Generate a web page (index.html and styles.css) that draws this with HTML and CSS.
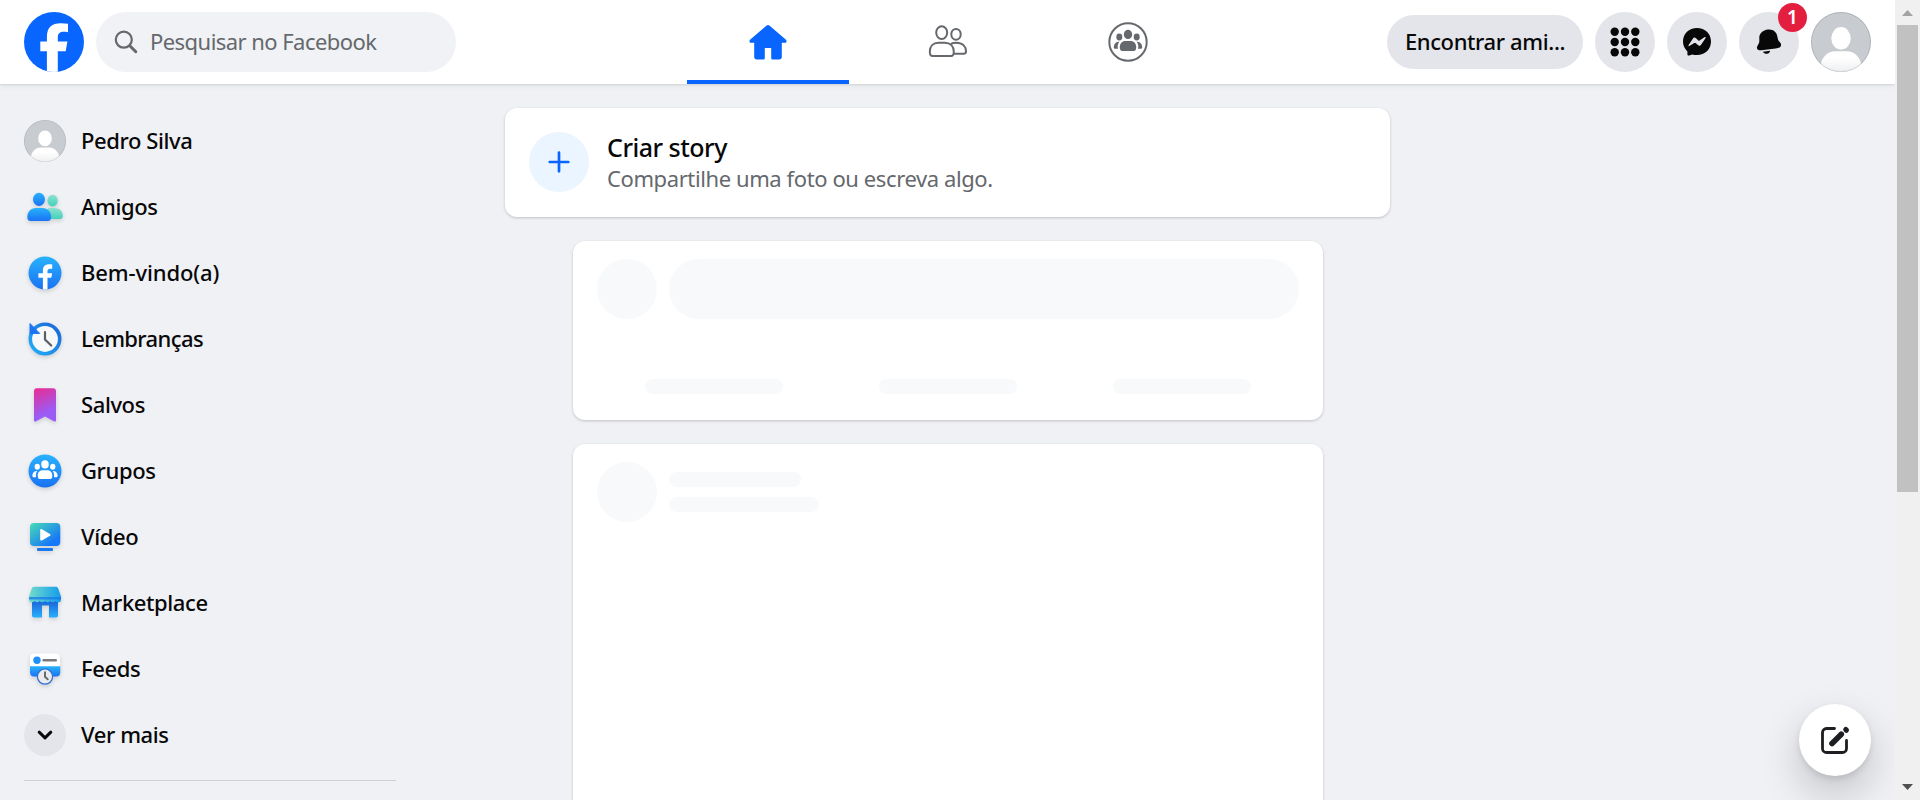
FILE: index.html
```html
<!DOCTYPE html>
<html lang="pt-BR">
<head>
<meta charset="utf-8">
<title>Facebook</title>
<link rel="stylesheet" href="styles.css">
</head>
<body>
<svg class="defs" width="0" height="0" aria-hidden="true">
  <defs>
    <linearGradient id="blue" x1="0" y1="0" x2="0" y2="1"><stop offset="0" stop-color="#28b2fc"/><stop offset="1" stop-color="#1a72f4"/></linearGradient>
    <linearGradient id="teal" x1="0" y1="0" x2="0" y2="1"><stop offset="0" stop-color="#8fe0d2"/><stop offset="1" stop-color="#43d2ba"/></linearGradient>
    <linearGradient id="ring" x1="1" y1="0" x2="0" y2="1"><stop offset="0" stop-color="#1c66d8"/><stop offset="1" stop-color="#22aef8"/></linearGradient>
    <linearGradient id="pink" x1="0.3" y1="0" x2="0.6" y2="1"><stop offset="0" stop-color="#e3309b"/><stop offset="0.75" stop-color="#9a5cf5"/></linearGradient>
    <linearGradient id="screen" x1="0" y1="0" x2="1" y2="1"><stop offset="0" stop-color="#48dcb4"/><stop offset="0.8" stop-color="#1677f8"/></linearGradient>
    <linearGradient id="roof" x1="0" y1="0" x2="1" y2="0"><stop offset="0" stop-color="#6fdccb"/><stop offset="1" stop-color="#149cec"/></linearGradient>
    <linearGradient id="shop" x1="0" y1="0" x2="0" y2="1"><stop offset="0.2" stop-color="#1c6bdc"/><stop offset="1" stop-color="#28b0fc"/></linearGradient>
    <linearGradient id="body" x1="0" y1="0" x2="0" y2="1"><stop offset="0.3" stop-color="#fff"/><stop offset="1" stop-color="#eeeff1"/></linearGradient>
    <clipPath id="round"><circle cx="30" cy="30" r="30"/></clipPath>
    <symbol id="person" viewBox="0 0 60 60">
      <g clip-path="url(#round)">
        <rect width="60" height="60" fill="#c8cbcf"/>
        <ellipse cx="30" cy="26.3" rx="9.7" ry="11.2" fill="#fff"/>
        <path d="M9.500 53C11.500 43.500 18 39.300 24 39.300h12c6 0 12.500 4.200 14.500 13.700L46 60H14z" fill="url(#body)"/>
      </g>
      <circle cx="30" cy="30" r="29.500" fill="none" stroke="#000" stroke-opacity=".12"/>
    </symbol>
    <symbol id="crowd" viewBox="0 0 40 40">
      <ellipse cx="20" cy="12.400" rx="4.200" ry="4.600"/>
      <ellipse cx="11.300" cy="15" rx="3" ry="3.400"/>
      <ellipse cx="28.700" cy="15" rx="3" ry="3.400"/>
      <path d="M17.500 19h5c3.600 0 5.700 2.600 5.700 6.200 0 2.200-.8 3.700-2.300 3.700H14.100c-1.500 0-2.300-1.500-2.300-3.700 0-3.600 2.100-6.200 5.700-6.200z"/>
      <path d="M11.300 19.700c-1.600 2.400-2 4.600-1.300 7.100H7.200c-1 0-1.500-.8-1.400-1.900.2-3 2-5.300 5.500-5.200zM28.700 19.700c1.600 2.400 2 4.600 1.300 7.100h2.800c1 0 1.500-.8 1.400-1.900-.2-3-2-5.300-5.500-5.200z"/>
    </symbol>
  </defs>
</svg>

<div class="page">
  <header class="topbar">
    <div class="start">
      <svg class="logo" viewBox="0 0 60 60"><circle cx="30" cy="30" r="30" fill="#0866ff"/><path clip-path="url(#round)" d="M22.900 60V39.200H16.300V29.600h6.600v-4.400C22.900 15 28 11.200 36.700 11.200c2.600 0 5 .2 7.300.6v8.400c-1.300-.3-2.700-.4-4-.4-4.300 0-6.200 1.900-6.200 5.600v4.200h9.600l-1.700 9.600h-7.900V60z" fill="#fff"/></svg>
      <label class="search">
        <svg viewBox="0 0 24 24" width="24" height="24" fill="none" stroke="#65686c" stroke-linecap="round"><circle cx="9.800" cy="9.700" r="8" stroke-width="2.200"/><path d="M15.800 15.700l6 6" stroke-width="3"/></svg>
        <span class="search-text">Pesquisar no Facebook</span>
      </label>
    </div>
    <nav class="tabs">
      <a class="tab active"><svg width="40" height="40" viewBox="0 0 40 40"><path d="M18.600 3.400c.8-.7 2-.7 2.800 0L38 17.800c.8.700.7 3-.8 3h-3.400v14c0 1.800-1 2.700-2.700 2.700H24.500a1.300 1.300 0 0 1-1.300-1.300V26h-6.400v10.200a1.300 1.300 0 0 1-1.300 1.300H8.900c-1.700 0-2.700-.9-2.700-2.700v-14H2.800c-1.500 0-1.600-2.300-.8-3z" fill="#0866ff"/></svg></a>
      <a class="tab"><svg width="40" height="40" viewBox="0 0 40 40" fill="none" stroke="#65686c" stroke-width="2"><ellipse cx="13.700" cy="10.600" rx="5.500" ry="6.400"/><ellipse cx="28" cy="12.300" rx="4.700" ry="5.400"/><path d="M10.500 20.700h6.300c5.500 0 9 3.500 9 9 0 2.700-.9 4.300-2.800 4.300H4.700c-2 0-2.900-1.600-2.900-4.300 0-5.500 3.400-9 8.700-9zM23 21.800c1.500-.8 3-1.100 5-1.100 6.700 0 10 3.700 10 8.600 0 1.700-.9 2.500-2.400 2.500H26"/></svg></a>
      <a class="tab"><svg width="40" height="40" viewBox="0 0 40 40" fill="#65686c"><circle cx="20" cy="20" r="18.700" fill="none" stroke="#65686c" stroke-width="2"/><use href="#crowd" width="40" height="40"/></svg></a>
    </nav>
    <div class="actions">
      <button class="pill">Encontrar ami...</button>
      <div class="round"><svg width="30" height="30" viewBox="0 0 30 30" fill="#080809"><circle cx="4.700" cy="4.700" r="4.200"/><circle cx="15" cy="4.700" r="4.200"/><circle cx="25.300" cy="4.700" r="4.200"/><circle cx="4.700" cy="15" r="4.200"/><circle cx="15" cy="15" r="4.200"/><circle cx="25.300" cy="15" r="4.200"/><circle cx="4.700" cy="25.300" r="4.200"/><circle cx="15" cy="25.300" r="4.200"/><circle cx="25.300" cy="25.300" r="4.200"/></svg></div>
      <div class="round"><svg width="30" height="30" viewBox="0 0 30 30"><path d="M15 1C7 1 1 6.700 1 14.500c0 4 1.700 7.400 4.400 9.900v2.800c0 1.100.8 1.700 1.900 1.300l2.900-1.100c1.500.4 3.100.6 4.800.6 8 0 14-5.700 14-13.500S23 1 15 1z" fill="#080809"/><path d="M7 18.500l4.500-6.700c.5-.7 1.200-.8 1.800-.3l3.500 3.300 6.300-4.200-4.700 7c-.5.700-1.200.8-1.800.3l-3.400-3.100z" fill="#e4e5ea" stroke="#e4e5ea" stroke-width="1.200" stroke-linejoin="round"/></svg></div>
      <div class="round"><svg width="30" height="30" viewBox="0 0 30 30" fill="#080809"><path d="M14 2.600c5-.6 8.600 2.300 9.400 6.800.4 3 1 4.300 2.700 6.100 1.200 1.200 1.400 3.400.1 4.400-1.200 1-2.800 1.400-4.600 1.700l-14.200 1.700c-1.500.2-3.200 0-4-1-.9-1.200-.4-2.900.4-4.100 1.400-2.100 1.700-3.600 1.500-6.500C5 6.700 8.600 3.200 14 2.600zM8.900 24.700l7.200-.9c-.3 1.700-1.300 2.800-3 3-1.700.2-3.300-.6-4.200-2.100z"/></svg><span class="badge">1</span></div>
      <svg class="avatar-lg" width="60" height="60"><use href="#person" width="60" height="60"/></svg>
    </div>
  </header>

  <div class="layout">
    <aside class="sidebar">
      <a class="item"><svg width="42" height="42"><use href="#person" width="42" height="42"/></svg><span>Pedro Silva</span></a>
      <a class="item"><svg class="lift" width="42" height="42" viewBox="0 0 42 42"><ellipse cx="28.600" cy="14.600" rx="5.200" ry="5.800" fill="url(#teal)"/><path d="M24 22h6c6 0 8.800 3.500 8.800 8 0 2-1 3-3 3H22z" fill="url(#teal)"/><ellipse cx="15" cy="13.400" rx="6" ry="6.600" fill="url(#blue)"/><path d="M12 22h6.500c5.500 0 8.600 4 8.600 9 0 2.500-1.100 4-3.100 4H6.400c-2 0-3.100-1.500-3.100-4 0-5 3.200-9 8.700-9z" fill="url(#blue)"/></svg><span>Amigos</span></a>
      <a class="item"><svg class="lift" width="42" height="42" viewBox="0 0 42 42"><circle cx="21" cy="21" r="16.500" fill="url(#blue)"/><path d="M18.900 37.200V25.800h-4.500v-4.600h4.500v-2.600c0-4.300 2.300-6.300 6.400-6.300.9 0 1.900.1 2.900.2v4.200h-2c-2 0-2.700 1-2.700 2.500v2h4.600l-.8 4.600h-3.800v11.400c-1.500.4-3 .4-4.600 0z" fill="#fff"/></svg><span class="loose">Bem-vindo(a)</span></a>
      <a class="item"><svg class="lift" width="42" height="42" viewBox="0 0 42 42"><circle cx="21" cy="21" r="14.700" fill="#f7f8fa" stroke="url(#ring)" stroke-width="3.600"/><path d="M6 5.500v9.900h9.700z" fill="#1c74f4" stroke="#1c74f4" stroke-linejoin="round"/><path d="M21 14v7.600l6.200 5.900" fill="none" stroke="#5b5e63" stroke-width="2.200" stroke-linecap="round"/></svg><span class="tight">Lembranças</span></a>
      <a class="item"><svg class="lift" width="42" height="42" viewBox="0 0 42 42"><path d="M13 4.300h16c2 0 3 1 3 3v29.200c0 1-.8 1.400-1.700.9L21 32.500l-9.300 4.900c-.9.500-1.700.1-1.700-.9V7.300c0-2 1-3 3-3z" fill="url(#pink)"/></svg><span>Salvos</span></a>
      <a class="item"><svg class="lift" width="42" height="42" viewBox="0 0 42 42"><circle cx="21" cy="21" r="16.500" fill="url(#blue)"/><use href="#crowd" x="3.200" y="3.400" width="35.600" height="35.600" fill="#fff"/></svg><span>Grupos</span></a>
      <a class="item"><svg class="lift" width="42" height="42" viewBox="0 0 42 42"><rect x="6" y="7" width="30.300" height="23" rx="4" fill="url(#screen)"/><path d="M16.200 14.200v9.200c0 1 .8 1.500 1.700 1l8-4.700c.9-.5.900-1.300 0-1.800l-8-4.700c-.9-.5-1.700 0-1.700 1z" fill="#fff"/><rect x="13" y="32" width="16" height="3" rx="1" fill="#1b76f2"/></svg><span>Vídeo</span></a>
      <a class="item"><svg class="lift" width="42" height="42" viewBox="0 0 42 42"><path d="M8 17h26v16.500c0 1.300-.7 2-2 2h-7V23.500h-7v12h-8c-1.300 0-2-.7-2-2z" fill="url(#shop)"/><path d="M10.500 4.800h21c1.400 0 2.300.6 2.700 1.800L37 14.500v3c0 2-1 2.800-2.800 2.800-1.200 0-2-.5-2.700-1.300-1.500 1.700-3.700 1.700-5.200 0-1.500 1.700-3.700 1.700-5.300 0-1.500 1.700-3.700 1.700-5.300 0-1.500 1.700-3.700 1.700-5.200 0-.7.800-1.500 1.300-2.700 1.300C6 20.300 5 19.500 5 17.500v-3l2.800-7.900c.4-1.200 1.300-1.800 2.700-1.800z" fill="url(#roof)"/><path d="M5 15h32v2.500H5z" fill="#1878e8" opacity=".75"/></svg><span>Marketplace</span></a>
      <a class="item"><svg class="lift" width="42" height="42" viewBox="0 0 42 42"><path d="M10 5.500h22c2.600 0 4 1.400 4 4V19H6V9.500c0-2.600 1.400-4 4-4z" fill="#fff"/><path d="M6 18.300h30.300v6c0 2.800-1.400 4.200-4 4.200H10c-2.600 0-4-1.400-4-4.200z" fill="url(#blue)"/><circle cx="13" cy="12.200" r="3.700" fill="#208ffa"/><path d="M19.700 12.200h12" stroke="#777b80" stroke-width="2.600" stroke-linecap="round"/><circle cx="21" cy="28.600" r="7.600" fill="#e9ebef" stroke="#2d6fd2" stroke-width="1.200"/><path d="M21 24.300v4.500l2.700 2.500" fill="none" stroke="#676a6f" stroke-width="2" stroke-linecap="round"/></svg><span>Feeds</span></a>
      <a class="item"><svg width="42" height="42" viewBox="0 0 42 42"><circle cx="21" cy="21" r="21" fill="#e4e5ea"/><path d="M15.200 18.200l5.800 5.600 5.800-5.600" fill="none" stroke="#080809" stroke-width="3" stroke-linecap="round" stroke-linejoin="round"/></svg><span>Ver mais</span></a>
      <hr class="divider">
    </aside>

    <main class="feed">
      <section class="card story">
        <svg width="60" height="61" viewBox="0 0 60 61"><circle cx="30" cy="30" r="30" fill="#ebf5ff"/><path d="M30 20.700v18.600M20.700 30h18.600" stroke="#0866ff" stroke-width="2.700" stroke-linecap="round"/></svg>
        <div class="story-copy">
          <h2>Criar story</h2>
          <p>Compartilhe uma foto ou escreva algo.</p>
        </div>
      </section>
      <section class="card composer">
        <div class="composer-row"><div class="ghost dot"></div><div class="ghost field"></div></div>
        <div class="bars"><div class="ghost bar"></div><div class="ghost bar"></div><div class="ghost bar"></div></div>
      </section>
      <section class="card post">
        <div class="ghost dot"></div>
        <div class="lines"><div class="ghost line-a"></div><div class="ghost line-b"></div></div>
      </section>
    </main>
  </div>

  <button class="compose"><svg width="32" height="32" viewBox="0 0 32 32" fill="none" stroke="#1c1e21" stroke-linecap="round"><path d="M15.500 4.500H7.500a4 4 0 0 0-4 4v16a4 4 0 0 0 4 4h16a4 4 0 0 0 4-4V16.500" stroke-width="2.800"/><path d="M13 19.500L22.300 10.200" stroke-width="5.600"/><path d="M26.800 5.600l.6.600" stroke-width="5.200"/></svg></button>
</div>

<div class="scrollbar">
  <svg width="25" height="25" viewBox="0 0 25 25"><path d="M7 16h11l-5.500-6z" fill="#a3a3a3"/></svg>
  <div class="thumb"></div>
  <svg class="down" width="25" height="25" viewBox="0 0 25 25"><path d="M7 9h11l-5.500 6z" fill="#505050"/></svg>
</div>
</body>
</html>
```
FILE: styles.css
```css
* { box-sizing: border-box; }

body {
  margin: 0;
  height: 800px;
  overflow: hidden;
  display: flex;
  background: #f0f1f5;
  color: #080809;
  font: 500 22px/30px "Noto Sans", "Open Sans", sans-serif;
}

svg { display: block; flex: none; }
.defs { position: absolute; }

.page { position: relative; width: 1895px; height: 800px; overflow: hidden; }

.topbar {
  position: relative;
  z-index: 2;
  height: 84px;
  padding: 0 24px;
  display: grid;
  grid-template-columns: 654px 539px 1fr;
  align-items: center;
  background: #fff;
  box-shadow: 0 1px 2px rgba(0, 0, 0, .1), 0 3px 6px rgba(0, 0, 0, .04);
}

.start { display: flex; gap: 12px; }
.logo { width: 60px; height: 60px; }

.search {
  width: 360px;
  height: 60px;
  padding-left: 18px;
  display: flex;
  align-items: center;
  gap: 12px;
  border-radius: 30px;
  background: #f0f2f5;
  color: #65686c;
  font-weight: 400;
}
.search-text { padding-bottom: 2px; letter-spacing: -.55px; white-space: nowrap; }

.tabs { display: flex; height: 84px; }
.tab {
  width: 180px;
  display: flex;
  align-items: center;
  justify-content: center;
}
.tab:last-child { width: 179px; }
.tab.active { background: linear-gradient(#0866ff, #0866ff) center bottom / 162px 4px no-repeat; }

.actions { display: flex; align-items: center; justify-content: flex-end; gap: 12px; }
.pill {
  width: 196px;
  height: 54px;
  padding: 0 0 2px;
  border: 0;
  border-radius: 27px;
  background: #e4e5ea;
  color: #080809;
  font: inherit;
  letter-spacing: -.38px;
  white-space: nowrap;
}
.round {
  position: relative;
  width: 60px;
  height: 60px;
  display: flex;
  align-items: center;
  justify-content: center;
  border-radius: 50%;
  background: #e4e5ea;
}
.badge {
  position: absolute;
  top: -9px;
  right: -8px;
  width: 29px;
  height: 29px;
  border-radius: 50%;
  background: #e41e3f;
  color: #fff;
  font-size: 19px;
  font-weight: 600;
  line-height: 29px;
  text-align: center;
}

.layout { display: flex; height: 716px; }

.sidebar { width: 505px; padding: 24px 0 0 24px; }
.item {
  height: 66px;
  padding: 12px 0;
  display: flex;
  align-items: center;
  gap: 15px;
  letter-spacing: -.4px;
  white-space: nowrap;
}
.item span { padding-bottom: 2px; }
.item .loose { letter-spacing: -.12px; }
.item .tight { letter-spacing: -.62px; }
.lift { filter: drop-shadow(0 2px 2px rgba(0, 0, 0, .14)); }
.divider { width: 372px; height: 1px; margin: 12px 0 0; border: 0; background: #ced0d4; }

.feed { width: 885px; padding-top: 24px; display: flex; flex-direction: column; align-items: center; gap: 24px; }
.card {
  flex: none;
  border-radius: 12px;
  background: #fff;
  box-shadow: 0 1px 3px rgba(0, 0, 0, .2);
}
.story { width: 885px; height: 109px; padding: 0 24px; display: flex; align-items: center; gap: 18px; }
.story-copy { padding-bottom: 1px; }
.story-copy h2 { margin: 0; font-size: 25px; font-weight: 500; line-height: 32px; letter-spacing: -.5px; }
.story-copy p { margin: 0; color: #65686c; font-weight: 400; line-height: 30px; letter-spacing: -.4px; white-space: nowrap; }

.ghost { background: #f7f9fb; }
.dot { width: 60px; height: 60px; border-radius: 50%; }
.composer { width: 750px; height: 179px; padding: 18px 24px; }
.composer-row { display: flex; gap: 12px; }
.field { width: 630px; height: 60px; border-radius: 30px; }
.bars { margin-top: 60px; display: flex; justify-content: center; gap: 96px; }
.bar { width: 138px; height: 15px; border-radius: 8px; }

.post { width: 750px; height: 420px; padding: 18px 24px; display: flex; gap: 12px; }
.lines { padding-top: 10px; display: flex; flex-direction: column; gap: 10px; }
.line-a { width: 132px; height: 15px; border-radius: 8px; }
.line-b { width: 150px; height: 15px; border-radius: 8px; }

.compose {
  position: absolute;
  right: 24px;
  bottom: 24px;
  width: 72px;
  height: 72px;
  padding: 0;
  display: flex;
  align-items: center;
  justify-content: center;
  border: 0;
  border-radius: 50%;
  background: #fff;
  box-shadow: 0 18px 42px rgba(0, 0, 0, .2), 0 3px 6px rgba(0, 0, 0, .1);
}

.scrollbar { width: 25px; height: 800px; display: flex; flex-direction: column; align-items: center; background: #f0f0f0; }
.thumb { width: 21px; height: 467px; background: #c1c1c1; }
.down { margin-top: auto; }
```
